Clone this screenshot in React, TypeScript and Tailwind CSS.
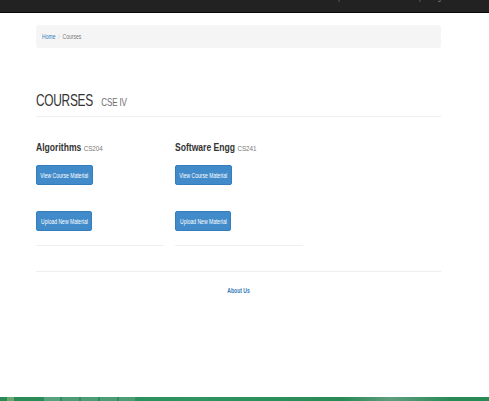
import React from "react";

const btn =
  "h-[20px] flex items-center justify-center rounded-[2px] bg-[#428bca] border border-[#357ebd] text-white text-[7px] leading-none whitespace-nowrap";

function Course({ name, code }: { name: string; code: string }) {
  return (
    <div className="w-[128px] flex flex-col">
      <div className="text-[11px] leading-none font-bold text-[#333] whitespace-nowrap origin-left scale-x-[0.78]">
        {name}
        <span className="ml-[3px] text-[8px] font-normal text-[#777]">{code}</span>
      </div>
      <div className={btn + " mt-[12px] w-[57px]"}>
        <span className="inline-block shrink-0 scale-x-[0.72]">View Course Material</span>
      </div>
      <div className={btn + " mt-[26px] w-[56px]"}>
        <span className="inline-block shrink-0 scale-x-[0.72]">Upload New Material</span>
      </div>
      <div className="mt-[14px] border-t border-[#eee]" />
    </div>
  );
}

export default function App() {
  return (
    <div className="h-[401px] w-[489px] flex flex-col bg-white overflow-hidden font-['Liberation_Sans',Arial,sans-serif]">
      <div className="h-[13px] shrink-0 bg-[#222] border-b border-[#080808] overflow-hidden">
        <div className="ml-[37px] w-[408px] flex justify-between -mt-[6px] text-[8px] leading-[8px] text-[#8a8a8a] whitespace-nowrap">
          <span className="inline-block origin-left scale-x-[0.72] tracking-[0.6px]">CSE DEPARTMENT MATERIAL PORTAL</span>
          <div className="flex gap-[15px] origin-right scale-x-[0.72]">
            <span>Home</span>
            <span>Courses</span>
            <span>Tnp</span>
            <span>Notices</span>
            <span>Events</span>
            <span>Faq</span>
            <span>Login</span>
          </div>
        </div>
      </div>

      <div className="ml-[36px] w-[405px] flex flex-col">
        <div className="mt-[12px] h-[23px] bg-[#f5f5f5] rounded-[3px] px-[6px] flex items-center text-[7px] leading-none">
          <div className="flex origin-left scale-x-[0.72] whitespace-nowrap">
            <span className="text-[#337ab7]">Home</span>
            <span className="px-[4px] text-[#ccc]">/</span>
            <span className="text-[#777]">Courses</span>
          </div>
        </div>

        <div className="mt-[44px] h-[17px] text-[17px] leading-none text-[#333] whitespace-nowrap tracking-[-0.4px] origin-left scale-x-[0.7]">
          COURSES
          <span className="ml-[12px] text-[11.5px] text-[#6f6f6f] tracking-[-0.2px]">CSE IV</span>
        </div>
        <div className="mt-[7px] border-t border-[#eee]" />

        <div className="mt-[25px] flex gap-[11px]">
          <Course name="Algorithms" code="CS204" />
          <Course name="Software Engg" code="CS241" />
        </div>

        <div className="mt-[25px] border-t border-[#eee]" />
        <div className="mt-[15px] flex justify-center text-[7px] leading-[7px] font-bold text-[#337ab7]">
          <span className="inline-block scale-x-[0.72] whitespace-nowrap">About Us</span>
        </div>
      </div>

      <div className="flex-1" />

      <div className="h-[4px] shrink-0 flex bg-[linear-gradient(90deg,#2a8a55_0%,#2f9460_40%,#2a8a55_70%,#5f9e7e_80%,#2a8a55_92%,#2a8a55_100%)]">
        <div className="ml-[7px] w-[7px] bg-[#6aa86f]" />
        <div className="ml-[30px] w-[16px] bg-[#55a27c]" />
        <div className="ml-[2px] w-[17px] bg-[#4e9c73]" />
        <div className="ml-[2px] w-[17px] bg-[#4e9c73]" />
        <div className="ml-[2px] w-[17px] bg-[#4e9c73]" />
        <div className="ml-[2px] w-[16px] bg-[#4e9c73]" />
      </div>
    </div>
  );
}
